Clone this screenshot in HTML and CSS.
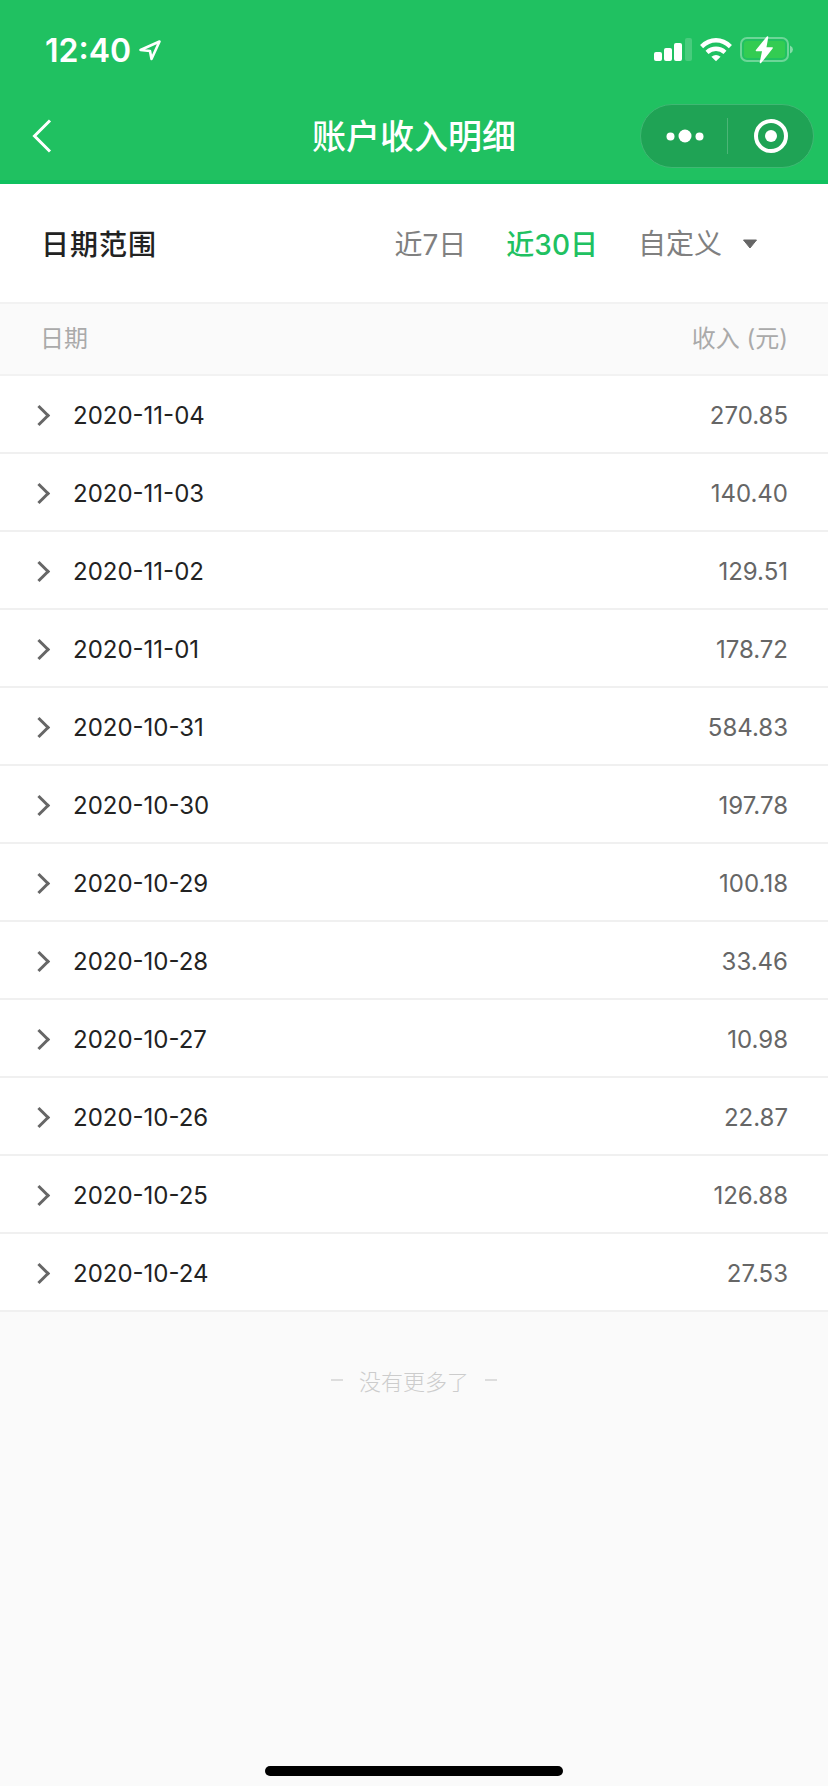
FILE: index.html
```html
<!DOCTYPE html>
<html lang="zh-CN">
  <head>
    <meta charset="UTF-8" />
    <meta name="viewport" content="width=device-width, initial-scale=1.0" />
    <title>账户收入明细</title>
    <link rel="stylesheet" href="styles.css">
  </head>

  <body>
    <!-- 顶部 -->
    <header class="top">
      <div class="status">
        <div class="status-left">
          <span class="time">12:40</span>
          <svg width="22" height="22" viewBox="0 0 22 22">
            <path d="M1.5 11 20.5 2.5 12.5 20 11 12Z" fill="none" stroke="#fff" stroke-width="2.6" stroke-linejoin="round" />
          </svg>
        </div>
        <div class="status-right">
          <!-- 信号 -->
          <svg width="38" height="24" viewBox="0 0 38 24" fill="#fff">
            <rect x="0" y="14" width="8" height="9" rx="2" />
            <rect x="10" y="10" width="8" height="13" rx="2" />
            <rect x="20" y="5" width="8" height="18" rx="2" />
            <rect x="31" y="0" width="7" height="23" rx="2" opacity=".18" />
          </svg>
          <!-- wifi -->
          <svg width="32" height="24" viewBox="0 0 32 24" fill="none" stroke="#fff" stroke-width="4.4">
            <path d="M1.6 8.6Q8 2.3 16 2.3T30.4 8.6" />
            <path d="M7 14.4Q11 10.8 16 10.8T25 14.4" />
            <path d="M16 23.3 11.4 18.7Q16 15.2 20.6 18.7Z" fill="#fff" stroke="none" />
          </svg>
          <!-- 电池 -->
          <svg width="54" height="28" viewBox="0 0 54 28">
            <rect x="1" y="2" width="47" height="23" rx="6" fill="none" stroke="#fff" stroke-width="2" opacity=".35" />
            <rect x="4" y="5" width="41" height="17" rx="3" fill="#33cc52" />
            <path d="M50 9.5Q53 11 53 13.5T50 17.5Z" fill="#fff" opacity=".45" />
            <path d="M27.5 1 16.5 14.5H23L20.5 26.5 32 12H25.5Z" fill="#fff" stroke="#fff" stroke-width="1.6" stroke-linejoin="round" />
          </svg>
        </div>
      </div>

      <nav class="nav">
        <button class="back" type="button" aria-label="返回">
          <svg width="20" height="36" viewBox="0 0 20 36">
            <path d="M18 2.5 2.5 18 18 33.5" fill="none" stroke="#fff" stroke-width="3" />
          </svg>
        </button>
        <h1>账户收入明细</h1>
        <div class="capsule">
          <button type="button" aria-label="更多">
            <svg width="38" height="14" viewBox="0 0 38 14" fill="#fff">
              <circle cx="4.5" cy="7.5" r="4" />
              <circle cx="19" cy="7" r="6.5" />
              <circle cx="33.5" cy="7.5" r="4" />
            </svg>
          </button>
          <button type="button" aria-label="关闭">
            <svg width="34" height="34" viewBox="0 0 34 34">
              <circle cx="17" cy="17" r="15" fill="none" stroke="#fff" stroke-width="4" />
              <circle cx="17" cy="17" r="6" fill="#fff" />
            </svg>
          </button>
        </div>
      </nav>
    </header>

    <!-- 日期范围 -->
    <section class="filter">
      <h2>日期范围</h2>
      <div class="range">
        <button type="button">近7日</button>
        <button type="button" class="on">近30日</button>
        <div class="custom">
          <select aria-label="自定义日期范围">
            <option>自定义</option>
          </select>
          <svg width="16" height="10" viewBox="0 0 16 10">
            <path d="M1.5 1H14.5L8 9Z" fill="#666" stroke="#666" stroke-linejoin="round" />
          </svg>
        </div>
      </div>
    </section>

    <!-- 收入列表 -->
    <table class="list">
      <thead>
        <tr><th>日期</th><th>收入 (元)</th></tr>
      </thead>
      <tbody>
        <tr><td><button type="button">2020-11-04</button></td><td>270.85</td></tr>
        <tr><td><button type="button">2020-11-03</button></td><td>140.40</td></tr>
        <tr><td><button type="button">2020-11-02</button></td><td>129.51</td></tr>
        <tr><td><button type="button">2020-11-01</button></td><td>178.72</td></tr>
        <tr><td><button type="button">2020-10-31</button></td><td>584.83</td></tr>
        <tr><td><button type="button">2020-10-30</button></td><td>197.78</td></tr>
        <tr><td><button type="button">2020-10-29</button></td><td>100.18</td></tr>
        <tr><td><button type="button">2020-10-28</button></td><td>33.46</td></tr>
        <tr><td><button type="button">2020-10-27</button></td><td>10.98</td></tr>
        <tr><td><button type="button">2020-10-26</button></td><td>22.87</td></tr>
        <tr><td><button type="button">2020-10-25</button></td><td>126.88</td></tr>
        <tr><td><button type="button">2020-10-24</button></td><td>27.53</td></tr>
      </tbody>
    </table>

    <p class="nomore">没有更多了</p>

    <!-- 底部横条 -->
    <div class="home"></div>
  </body>
</html>
```

FILE: styles.css
```css
* {
  box-sizing: border-box;
}

body, h1, h2, p {
  margin: 0;
}

body {
  display: flex;
  flex-direction: column;
  min-height: 100vh;
  background-color: #fafafa;
  border-bottom: 6px solid #fff;
  font-family: Inter, "Noto Sans CJK SC", sans-serif;
  font-size: 24px;
  color: #222;
}

button, select {
  padding: 0;
  border: none;
  background: none;
  font: inherit;
  color: inherit;
  cursor: pointer;
}

svg {
  display: block;
}

/* 顶部 */
.top {
  background-color: #20c161;
  border-bottom: 4px solid #10c15f;
  color: #fff;
}

.status {
  display: flex;
  justify-content: space-between;
  align-items: center;
  height: 88px;
  padding: 12px 34px 0 45px;
}

.status-left, .status-right {
  display: flex;
  align-items: center;
  gap: 8px;
}

.time {
  font-size: 32px;
  font-weight: 600;
}

.nav {
  display: grid;
  grid-template-columns: 1fr auto 1fr;
  align-items: center;
  height: 92px;
  padding: 4px 14px 0;
}

.back {
  justify-self: start;
  padding-left: 18px;
}

.nav h1 {
  padding-bottom: 4px;
  font-size: 34px;
  font-weight: 500;
}

.capsule {
  display: flex;
  justify-self: end;
  align-items: center;
  width: 174px;
  height: 64px;
  border: 1px solid #3fb873;
  border-radius: 32px;
  background-color: #1fa355;
}

.capsule button {
  flex: 1;
  display: flex;
  justify-content: center;
  align-items: center;
  height: 36px;
  padding-left: 2px;
}

.capsule button + button {
  border-left: 1px solid #4cb577;
}

/* 日期范围 */
.filter {
  display: flex;
  justify-content: space-between;
  align-items: center;
  height: 120px;
  padding: 0 70px 0 41px;
  border-bottom: 2px solid #f2f2f2;
  background-color: #fff;
  font-size: 28px;
}

.filter h2 {
  font-size: 28px;
  font-weight: 500;
  letter-spacing: 1px;
}

.range {
  display: flex;
  align-items: center;
  gap: 40px;
  color: #808080;
}

.range .on {
  color: #20c161;
  font-weight: 500;
}

.custom {
  display: flex;
  align-items: center;
  gap: 19px;
  padding-top: 2px;
}

.custom select {
  appearance: none;
}

/* 收入列表 */
.list {
  width: 100%;
  border-collapse: collapse;
}

.list th {
  height: 71px;
  padding: 0 40px 6px;
  border-bottom: 2px solid #f2f2f2;
  text-align: left;
  font-weight: 400;
  color: #aaa;
}

.list td {
  height: 78px;
  padding: 2px 40px 0 34px;
  border-bottom: 2px solid #f0f0f0;
  background-color: #fff;
  color: #666;
}

.list th:last-child, .list td:last-child {
  text-align: right;
}

.list button {
  display: flex;
  align-items: center;
  gap: 24px;
  color: #222;
}

/* 展开箭头 */
.list button::before {
  content: '';
  width: 12px;
  height: 12px;
  border-top: 3px solid #666;
  border-right: 3px solid #666;
  transform: translateX(-2px) rotate(45deg);
}

.nomore {
  display: flex;
  justify-content: center;
  align-items: center;
  gap: 16px;
  padding-top: 52px;
  font-size: 22px;
  font-weight: 300;
  color: #ccc;
}

.nomore::before, .nomore::after {
  content: '';
  width: 12px;
  height: 2px;
  background-color: #ddd;
}

.home {
  width: 36%;
  height: 10px;
  margin: auto auto 10px;
  border-radius: 5px;
  background-color: #000;
}
```
